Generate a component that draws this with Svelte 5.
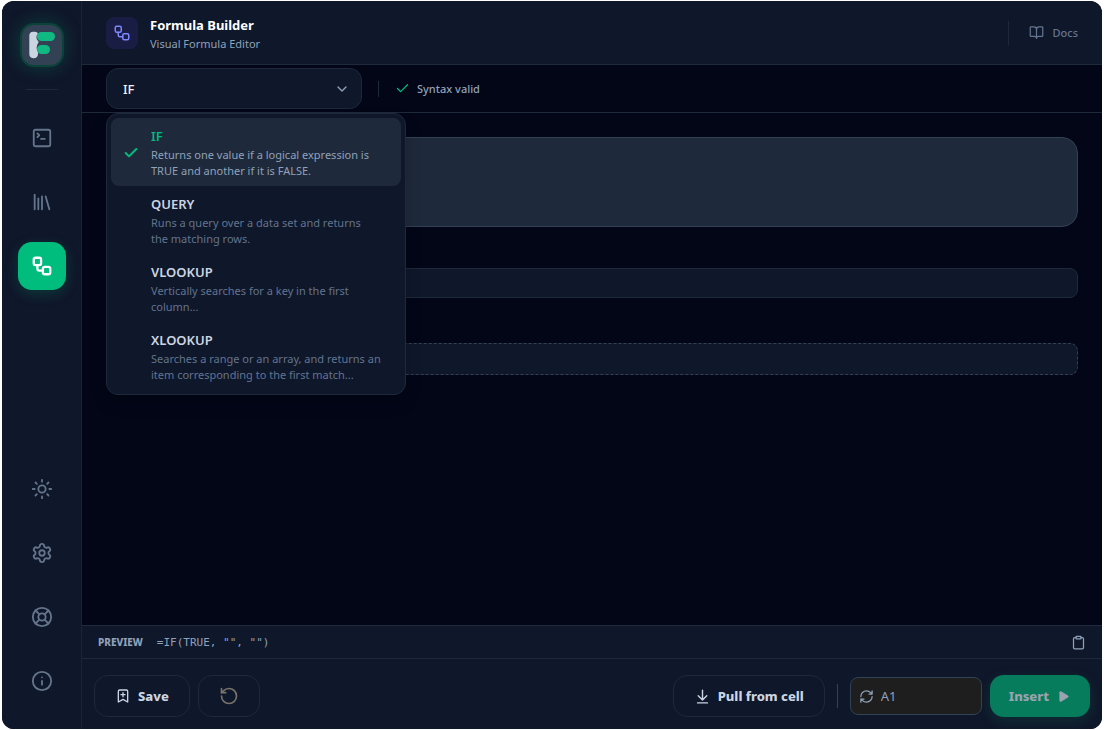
<script lang="ts">
  type Icon = 'terminal' | 'library' | 'workflow' | 'sun' | 'settings' | 'support' | 'info';

  const mainNav: { id: Icon; label: string }[] = [
    { id: 'terminal', label: 'Console' },
    { id: 'library', label: 'Library' },
    { id: 'workflow', label: 'Formula Builder' },
  ];

  const footerNav: { id: Icon; label: string }[] = [
    { id: 'sun', label: 'Theme' },
    { id: 'settings', label: 'Settings' },
    { id: 'support', label: 'Support' },
    { id: 'info', label: 'About' },
  ];

  const formulas = [
    {
      name: 'IF',
      description: 'Returns one value if a logical expression is\nTRUE and another if it is FALSE.',
      template: '=IF(TRUE, "", "")',
    },
    {
      name: 'QUERY',
      description: 'Runs a query over a data set and returns\nthe matching rows.',
      template: '=QUERY("", "")',
    },
    {
      name: 'VLOOKUP',
      description: 'Vertically searches for a key in the first\ncolumn...',
      template: '=VLOOKUP("", "", 1)',
    },
    {
      name: 'XLOOKUP',
      description:
        'Searches a range or an array, and returns an\nitem corresponding to the first match...',
      template: '=XLOOKUP("", "", "")',
    },
  ];

  let active = $state<Icon>('workflow');
  let selected = $state('IF');
  let open = $state(true);
  let cell = $state('A1');

  const preview = $derived(formulas.find((f) => f.name === selected)?.template ?? '');

  function pick(name: string) {
    selected = name;
    open = false;
  }
</script>

{#snippet icon(name: string, size: number, stroke: number)}
  <svg
    class="icon"
    width={size}
    height={size}
    viewBox="0 0 24 24"
    fill="none"
    stroke="currentColor"
    stroke-width={stroke}
    stroke-linecap="round"
    stroke-linejoin="round"
    aria-hidden="true"
  >
    {#if name === 'terminal'}
      <path d="m7 11 2-2-2-2M11 13h4" />
      <rect x="3" y="3" width="18" height="18" rx="2" />
    {:else if name === 'library'}
      <path d="m16 6 4 14M12 6v14M8 8v12M4 4v16" />
    {:else if name === 'workflow'}
      <rect x="3" y="3" width="8" height="8" rx="2" />
      <path d="M7 11v4a2 2 0 0 0 2 2h4" />
      <rect x="13" y="13" width="8" height="8" rx="2" />
    {:else if name === 'sun'}
      <circle cx="12" cy="12" r="4" />
      <path d="M12 2v2M12 20v2M4.93 4.93l1.41 1.41M17.66 17.66l1.41 1.41M2 12h2M20 12h2M6.34 17.66l-1.41 1.41M19.07 4.93l-1.41 1.41" />
    {:else if name === 'settings'}
      <path d="M9.671 4.136a2.34 2.34 0 0 1 4.659 0 2.34 2.34 0 0 0 3.319 1.915 2.34 2.34 0 0 1 2.33 4.033 2.34 2.34 0 0 0 0 3.831 2.34 2.34 0 0 1-2.33 4.033 2.34 2.34 0 0 0-3.319 1.915 2.34 2.34 0 0 1-4.659 0 2.34 2.34 0 0 0-3.32-1.915 2.34 2.34 0 0 1-2.33-4.033 2.34 2.34 0 0 0 0-3.831A2.34 2.34 0 0 1 6.35 6.051a2.34 2.34 0 0 0 3.319-1.915" />
      <circle cx="12" cy="12" r="3" />
    {:else if name === 'support'}
      <circle cx="12" cy="12" r="10" />
      <path d="m4.93 4.93 4.24 4.24M14.83 9.17l4.24-4.24M14.83 14.83l4.24 4.24M9.17 14.83l-4.24 4.24" />
      <circle cx="12" cy="12" r="4" />
    {:else if name === 'info'}
      <circle cx="12" cy="12" r="10" />
      <path d="M12 16v-4M12 8h.01" />
    {:else if name === 'book'}
      <path d="M12 7v14" />
      <path d="M3 18a1 1 0 0 1-1-1V4a1 1 0 0 1 1-1h5a4 4 0 0 1 4 4 4 4 0 0 1 4-4h5a1 1 0 0 1 1 1v13a1 1 0 0 1-1 1h-6a3 3 0 0 0-3 3 3 3 0 0 0-3-3z" />
    {:else if name === 'chevron'}
      <path d="m6 9 6 6 6-6" />
    {:else if name === 'check'}
      <path d="M20 6 9 17l-5-5" />
    {:else if name === 'clipboard'}
      <rect x="8" y="2" width="8" height="4" rx="1" />
      <path d="M16 4h2a2 2 0 0 1 2 2v14a2 2 0 0 1-2 2H6a2 2 0 0 1-2-2V6a2 2 0 0 1 2-2h2" />
    {:else if name === 'bookmark'}
      <path d="m19 21-7-4-7 4V5a2 2 0 0 1 2-2h10a2 2 0 0 1 2 2zM12 7v6M15 10H9" />
    {:else if name === 'reset'}
      <path d="M3 12a9 9 0 1 0 9-9 9.75 9.75 0 0 0-6.74 2.74L3 8" />
      <path d="M3 3v5h5" />
    {:else if name === 'pull'}
      <path d="M12 17V3M6 11l6 6 6-6M19 21H5" />
    {:else if name === 'refresh'}
      <path d="M3 12a9 9 0 0 1 9-9 9.75 9.75 0 0 1 6.74 2.74L21 8M21 3v5h-5" />
      <path d="M21 12a9 9 0 0 1-9 9 9.75 9.75 0 0 1-6.74-2.74L3 16M8 16H3v5" />
    {:else if name === 'play'}
      <path fill="currentColor" d="M6 5.5v13a1.5 1.5 0 0 0 2.3 1.2l10.6-6.4a1.5 1.5 0 0 0 0-2.6L8.3 4.3A1.5 1.5 0 0 0 6 5.5z" />
    {/if}
  </svg>
{/snippet}

{#snippet navButton(item: { id: Icon; label: string })}
  <button
    class="nav-item"
    class:active={active === item.id}
    aria-label={item.label}
    onclick={() => (active = item.id)}
  >
    {@render icon(item.id, 22, active === item.id ? 2.5 : 2)}
  </button>
{/snippet}

<div class="app">
  <nav class="sidebar">
    <div class="logo">
      <svg width="40" height="40" viewBox="0 0 40 40" aria-hidden="true">
        <path
          fill="#cbd5e1"
          d="M11 6.7h2c1.500 0 2.600.8 3 2.100-2 1.700-2.100 5.200.2 7.200.5.600.5 1.300 0 1.900-1.900 2.500-2.100 6.500-.2 9.300V29c0 2.500-1.700 4.300-4.200 4.300S7.300 31.700 7.300 29.200V10.500c0-2.300 1.500-3.800 3.700-3.800z"
        />
        <rect x="15" y="7" width="18" height="9" rx="4.5" fill="#10b981" />
        <rect x="15" y="20" width="13" height="9" rx="4.5" fill="#10b981" />
      </svg>
    </div>
    <hr />
    <div class="nav-group">
      {#each mainNav as item (item.id)}
        {@render navButton(item)}
      {/each}
    </div>
    <div class="nav-group bottom">
      {#each footerNav as item (item.id)}
        {@render navButton(item)}
      {/each}
    </div>
  </nav>

  <main>
    <header>
      <div class="badge">{@render icon('workflow', 18, 2)}</div>
      <div class="titles">
        <h1>Formula Builder</h1>
        <p>Visual Formula Editor</p>
      </div>
      <a class="docs" href="#docs">
        {@render icon('book', 15, 2)}
        Docs
      </a>
    </header>

    <div class="toolbar">
      <div class="picker">
        <select
          aria-label="Function"
          bind:value={selected}
          onmousedown={(e) => {
            e.preventDefault();
            open = !open;
          }}
        >
          {#each formulas as formula (formula.name)}
            <option>{formula.name}</option>
          {/each}
        </select>
        {@render icon('chevron', 16, 2)}

        {#if open}
          <div class="menu" role="listbox" aria-label="Functions">
            {#each formulas as formula (formula.name)}
              <button
                class="option"
                class:selected={formula.name === selected}
                role="option"
                aria-selected={formula.name === selected}
                onclick={() => pick(formula.name)}
              >
                <span class="tick">
                  {#if formula.name === selected}
                    {@render icon('check', 16, 3)}
                  {/if}
                </span>
                <span class="option-text">
                  <span class="name">{formula.name}</span>
                  <span class="description">{formula.description}</span>
                </span>
              </button>
            {/each}
          </div>
        {/if}
      </div>
      <div class="status">
        {@render icon('check', 15, 2)}
        <span>Syntax valid</span>
      </div>
    </div>

    <div class="canvas">
      <div class="card"></div>
      <input class="field" type="text" aria-label="Value if true" />
      <input class="field dashed" type="text" aria-label="Value if false" />
    </div>

    <div class="preview">
      <span class="preview-label">Preview</span>
      <code>{preview}</code>
      <button class="copy" aria-label="Copy formula">{@render icon('clipboard', 15, 2)}</button>
    </div>

    <footer>
      <button class="btn">
        {@render icon('bookmark', 16, 2)}
        Save
      </button>
      <button class="btn reset" aria-label="Reset">{@render icon('reset', 20, 2)}</button>
      <button class="btn pull">
        {@render icon('pull', 17, 2)}
        Pull from cell
      </button>
      <div class="separator"></div>
      <label class="cell">
        {@render icon('refresh', 15, 2)}
        <input type="text" aria-label="Target cell" bind:value={cell} />
      </label>
      <button class="btn insert">
        Insert
        {@render icon('play', 15, 1)}
      </button>
    </footer>
  </main>
</div>

<style>
  :global(body) {
    background: #fff;
  }
  .app {
    display: flex;
    box-sizing: border-box;
    height: calc(100vh - 2px);
    margin: 1px 6px 1px 2px;
    border-radius: 12px;
    overflow: hidden;
    background: #020617;
    color: #cbd5e1;
    font-family: 'Noto Sans', 'Open Sans', sans-serif;
    font-size: 11px;
  }
  button,
  input,
  select {
    box-sizing: border-box;
    margin: 0;
    font-family: inherit;
    color: inherit;
  }
  button {
    cursor: pointer;
  }
  .icon {
    flex: none;
    display: block;
  }

  .sidebar {
    display: flex;
    flex-direction: column;
    align-items: center;
    gap: 24px;
    flex: none;
    box-sizing: border-box;
    width: 80px;
    padding: 24px 0;
    background: #0f172a;
    border-right: 1px solid #1a2436;
  }
  .logo {
    width: 40px;
    height: 40px;
    border-radius: 12px;
    background: #334155;
    box-shadow:
      0 0 0 2px #0a4338,
      0 0 20px rgba(0, 188, 125, 0.3);
  }
  .logo svg {
    display: block;
  }
  hr {
    width: 32px;
    height: 1px;
    margin: 0;
    border: none;
    background: #1e293b;
  }
  .nav-group {
    display: flex;
    flex-direction: column;
    gap: 16px;
  }
  .nav-group.bottom {
    margin-top: auto;
  }
  .nav-item {
    display: flex;
    align-items: center;
    justify-content: center;
    width: 48px;
    height: 48px;
    padding: 0;
    border: none;
    border-radius: 14px;
    background: none;
    color: #64748b;
  }
  .nav-item.active {
    background: #00bc7d;
    color: #fff;
    box-shadow: 0 4px 14px rgba(0, 188, 125, 0.2);
  }

  main {
    display: flex;
    flex-direction: column;
    flex: 1;
    min-width: 0;
  }
  header {
    display: flex;
    align-items: center;
    gap: 12px;
    box-sizing: border-box;
    height: 64px;
    padding: 0 24px;
    background: #0f172a;
    border-bottom: 1px solid #1e293b;
  }
  .badge {
    display: flex;
    align-items: center;
    justify-content: center;
    width: 32px;
    height: 32px;
    border-radius: 8px;
    background: #1a1d43;
    color: #7c86ff;
  }
  .titles {
    padding-top: 5px;
  }
  h1 {
    margin: 0;
    color: #fff;
    font-size: 13px;
    line-height: 18px;
  }
  header p {
    margin: 0;
    color: #90a1b9;
    font-size: 11px;
    line-height: 20px;
  }
  .docs {
    display: flex;
    align-items: center;
    gap: 8px;
    margin-left: auto;
    padding-left: 20px;
    height: 24px;
    border-left: 1px solid #1e293b;
    color: #62748e;
    font-weight: 500;
    text-decoration: none;
  }

  .toolbar {
    display: flex;
    align-items: center;
    gap: 16px;
    box-sizing: border-box;
    height: 48px;
    padding: 0 24px;
    border-bottom: 1px solid #1e293b;
  }
  .picker {
    position: relative;
    width: 256px;
  }
  select {
    display: block;
    width: 100%;
    height: 41px;
    padding: 0 16px;
    appearance: none;
    border: 1px solid #1e293b;
    border-radius: 12px;
    background: #0f172a;
    color: #f1f5f9;
    font-size: 13px;
    font-weight: 500;
  }
  .picker > .icon {
    position: absolute;
    top: 13px;
    right: 12px;
    color: #90a1b9;
    pointer-events: none;
  }
  .menu {
    position: absolute;
    top: 45px;
    left: 0;
    z-index: 10;
    box-sizing: border-box;
    width: 300px;
    padding: 4px;
    border: 1px solid #1e293b;
    border-radius: 12px;
    background: #0f172a;
    box-shadow: 0 8px 16px rgba(0, 0, 0, 0.2);
  }
  .option {
    display: flex;
    align-items: center;
    gap: 12px;
    width: 100%;
    padding: 8px 12px 7px;
    border: none;
    border-radius: 8px;
    background: none;
    text-align: left;
  }
  .option.selected {
    background: #1e293b;
  }
  .tick {
    flex: none;
    width: 16px;
    color: #00bc7d;
  }
  .name {
    display: block;
    margin-bottom: 1px;
    color: #cbd5e1;
    font-size: 13px;
    font-weight: 600;
    line-height: 20px;
  }
  .description {
    display: block;
    color: #62748e;
    font-size: 11px;
    line-height: 16px;
    white-space: pre-line;
  }
  .selected .name {
    color: #00bc7d;
  }
  .selected .description {
    color: #90a1b9;
  }
  .status {
    display: flex;
    align-items: center;
    gap: 7px;
    height: 16px;
    padding-left: 16px;
    border-left: 1px solid #1e293b;
    color: #00bc7d;
  }
  .status span {
    color: #90a1b9;
    font-weight: 500;
  }

  .canvas {
    display: flex;
    flex-direction: column;
    flex: 1;
    padding: 24px;
  }
  .card {
    height: 88px;
    border: 1px solid #334155;
    border-radius: 16px;
    background: #1e293b;
  }
  .field {
    height: 30px;
    margin-top: 41px;
    padding: 0 12px;
    border: 1px solid #1e293b;
    border-radius: 8px;
    background: #0f172a;
  }
  .field.dashed {
    height: 32px;
    margin-top: 45px;
    border: 1px dashed #334155;
  }

  .preview {
    display: flex;
    align-items: center;
    gap: 14px;
    box-sizing: border-box;
    height: 34px;
    padding: 0 16px;
    border-top: 1px solid #1e293b;
    border-bottom: 1px solid #1e293b;
    background: #0f172a;
    color: #90a1b9;
  }
  .preview-label {
    font-size: 10px;
    font-weight: 800;
    text-transform: uppercase;
  }
  code {
    font-family: 'DejaVu Sans Mono', monospace;
    font-size: 11px;
  }
  .copy {
    margin-left: auto;
    padding: 0;
    border: none;
    background: none;
  }

  footer {
    display: flex;
    align-items: center;
    gap: 8px;
    padding: 16px 12px 12px;
    background: #0f172a;
  }
  .btn {
    display: flex;
    align-items: center;
    justify-content: center;
    gap: 7px;
    height: 42px;
    padding: 0 20px;
    border: 1px solid #1e293b;
    border-radius: 14px;
    background: none;
    font-size: 13px;
    font-weight: 800;
  }
  .reset {
    color: #79716b;
  }
  .pull {
    margin-left: auto;
  }
  .separator {
    width: 1px;
    height: 24px;
    margin: 0 4px;
    background: #334155;
  }
  .cell {
    display: flex;
    align-items: center;
    gap: 7px;
    box-sizing: border-box;
    width: 132px;
    height: 38px;
    padding: 0 8px;
    border: 1px solid #334155;
    border-radius: 8px;
    background: #1e1e1e;
    color: #90a1b9;
  }
  .cell input {
    flex: 1;
    min-width: 0;
    padding: 0;
    border: none;
    outline: none;
    background: none;
    font-size: 13px;
  }
  .insert {
    padding: 0 19px;
    border: none;
    background: #067c5d;
    color: #9ca3af;
    box-shadow: 0 4px 14px rgba(0, 188, 125, 0.15);
  }
</style>
